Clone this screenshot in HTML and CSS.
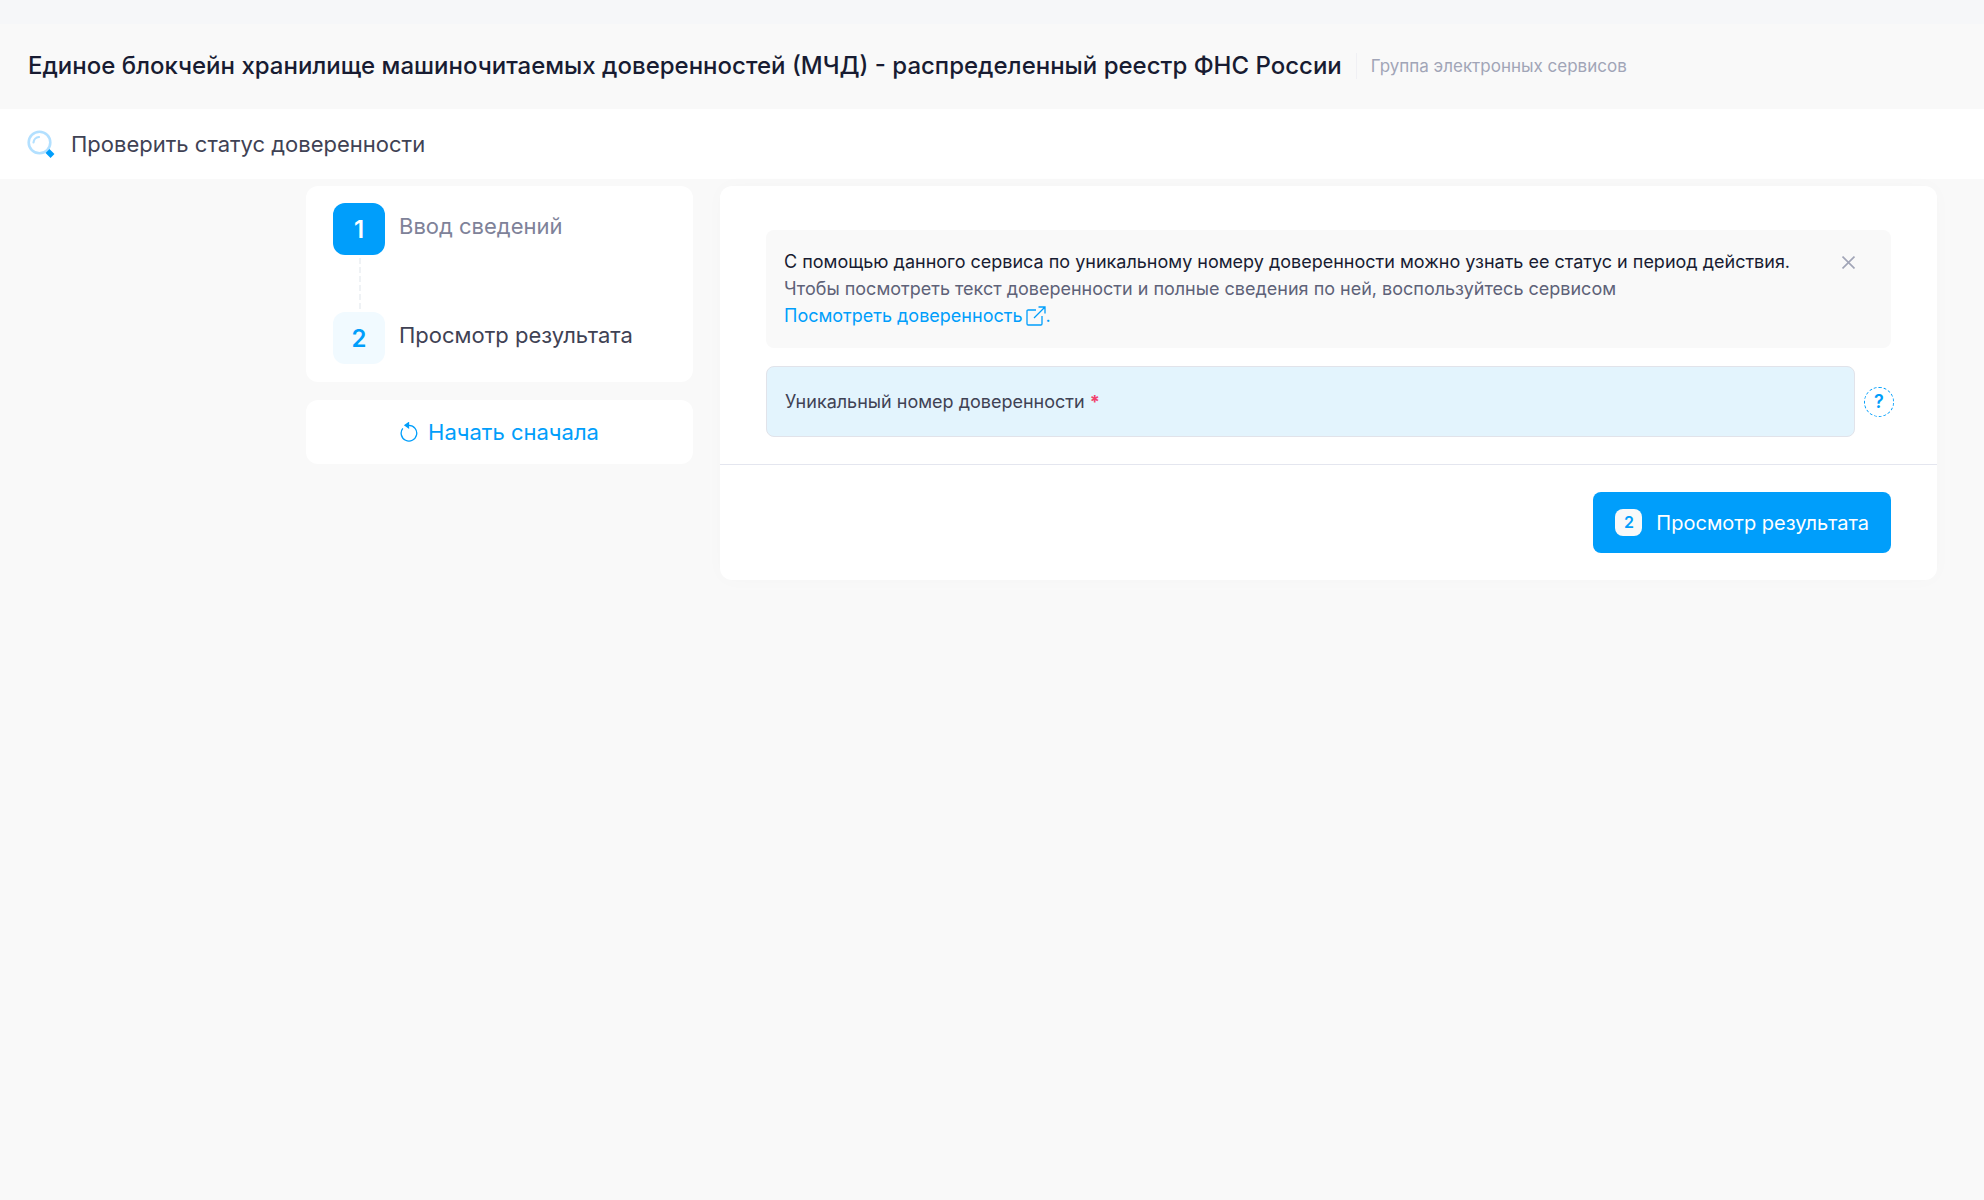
FILE: index.html
```html
<!DOCTYPE html>
<html lang="ru">
<head>
    <meta charset="UTF-8">
    <title>Проверить статус доверенности</title>
    <meta name="viewport" content="width=device-width, initial-scale=1.0">
    <link rel="stylesheet" href="styles.css">
</head>
<body>
    <header class="header">
        <h1>Единое блокчейн хранилище машиночитаемых доверенностей (МЧД) - распределенный реестр ФНС России</h1>
        <span class="header-group">Группа электронных сервисов</span>
    </header>

    <div class="service-bar">
        <svg class="service-icon" viewBox="0 0 28 28" fill="none" aria-hidden="true">
            <circle cx="12.5" cy="12.5" r="10.8" stroke="#b3e0ff" stroke-width="2.6"/>
            <path d="M6.5 12.5a6 6 0 0 1 5.5-5.5" stroke="#b3e0ff" stroke-width="2.2" stroke-linecap="round"/>
            <path d="M20.5 21l5 5" stroke="#009efb" stroke-width="5.5"/>
        </svg>
        <h2>Проверить статус доверенности</h2>
    </div>

    <main class="content">
        <aside class="sidebar">
            <ol class="card steps">
                <li class="step active">
                    <span class="step-number">1</span>
                    <span class="step-name">Ввод сведений</span>
                </li>
                <li class="step-line"></li>
                <li class="step">
                    <span class="step-number">2</span>
                    <span class="step-name">Просмотр результата</span>
                </li>
            </ol>
            <button type="button" class="card restart-btn">
                <svg class="restart-icon" viewBox="0 0 18 20" fill="none" stroke="currentColor" stroke-width="1.3" aria-hidden="true">
                    <path d="M2.8 6.4A7.8 7.8 0 1 0 9 3.4H6"/>
                    <path d="M8.5 .8v5L5 3.3z" fill="currentColor"/>
                </svg>
                Начать сначала
            </button>
        </aside>

        <form class="card form">
            <div class="form-body">
                <div class="notice">
                    <div class="notice-text">
                        <p class="notice-title">С помощью данного сервиса по уникальному номеру доверенности можно узнать ее статус и период действия.</p>
                        <p>Чтобы посмотреть текст доверенности и полные сведения по ней, воспользуйтесь сервисом</p>
                        <p><a href="#">Посмотреть доверенность
                            <svg class="link-icon" viewBox="0 0 20 20" fill="none" stroke="currentColor" stroke-width="1.3" aria-hidden="true">
                                <path d="M10 4H2.2Q1 4 1 5.2V17.8Q1 19 2.2 19H14.8Q16 19 16 17.8V10"/>
                                <path d="M8 12L19 1M12.5 1H19V7.5"/>
                            </svg>.</a></p>
                    </div>
                    <button type="button" class="close-btn" aria-label="Закрыть">
                        <svg viewBox="0 0 12 12" fill="none" stroke="currentColor" stroke-width="1.5" aria-hidden="true">
                            <path d="M.5 .5l11 11M11.5 .5l-11 11"/>
                        </svg>
                    </button>
                </div>
                <div class="field-row">
                    <div class="field">
                        <label for="poaNumber">Уникальный номер доверенности <span class="required">*</span></label>
                        <input type="text" id="poaNumber" required>
                    </div>
                    <button type="button" class="help-btn" aria-label="Справка">?</button>
                </div>
            </div>
            <div class="form-footer">
                <button type="submit" class="submit-btn">
                    <span class="submit-number">2</span>
                    Просмотр результата
                </button>
            </div>
        </form>
    </main>
</body>
</html>
```
FILE: styles.css
```css
:root {
    --blue: #009efb;
    --bg: #f9f9f9;
    --dark: #181c32;
    --text: #3f4254;
    --muted: #7e8299;
}
* {
    box-sizing: border-box;
}
body {
    margin: 0;
    min-height: 100vh;
    padding-top: 24px;
    font-family: Inter, 'Noto Sans', sans-serif;
    font-size: 18px;
    color: var(--text);
    background: linear-gradient(#f6f7f9 24px, var(--bg) 24px);
}
h1, h2, p {
    margin: 0;
}
button, input {
    font: inherit;
}
button {
    cursor: pointer;
}
a {
    color: var(--blue);
    text-decoration: none;
}
.header {
    display: flex;
    align-items: center;
    min-height: 85px;
    padding: 0 28px 2px;
}
.header h1 {
    font-size: 24px;
    font-weight: 500;
    color: var(--dark);
}
.header-group {
    margin-left: 14px;
    padding-left: 14px;
    border-left: 1px solid #f0f0f4;
    font-size: 17px;
    line-height: 26px;
    color: #a1a5b7;
}
.service-bar {
    display: flex;
    align-items: center;
    gap: 16px;
    min-height: 70px;
    padding: 0 27px;
    background: #fff;
}
.service-bar h2 {
    font-size: 22px;
    font-weight: 400;
}
.service-icon {
    width: 28px;
    height: 28px;
}
.content {
    display: flex;
    align-items: flex-start;
    gap: 27px;
    padding: 7px 47px 0 306px;
}
.card {
    background: #fff;
    border-radius: 12px;
}
.sidebar {
    flex: 0 0 387px;
}
.steps {
    margin: 0 0 18px;
    padding: 17px 27px 18px;
    list-style: none;
}
.step {
    display: flex;
    gap: 14px;
}
.step-number {
    display: flex;
    align-items: center;
    justify-content: center;
    width: 52px;
    height: 52px;
    border-radius: 12px;
    background: #f1faff;
    color: var(--blue);
    font-size: 24px;
    font-weight: 600;
}
.step-name {
    font-size: 22px;
    line-height: 46px;
}
.step.active .step-number {
    background: var(--blue);
    color: #fff;
}
.step.active .step-name {
    color: var(--muted);
}
.step-line {
    height: 51px;
    margin: 3px 0 3px 26px;
    border-left: 2px dashed #eff2f5;
}
.restart-btn {
    display: flex;
    align-items: center;
    justify-content: center;
    gap: 10px;
    width: 100%;
    height: 64px;
    border: none;
    color: var(--blue);
    font-size: 22px;
}
.restart-icon {
    width: 18px;
    height: 20px;
}
.form {
    flex: 1;
    box-shadow: 0 0 20px rgba(76, 87, 125, 0.02);
}
.form-body {
    padding: 44px 46px 27px;
}
.notice {
    display: flex;
    align-items: flex-start;
    justify-content: space-between;
    margin-bottom: 18px;
    padding: 18px 36px 19px 18px;
    border-radius: 8px;
    background: var(--bg);
}
.notice-text {
    line-height: 27px;
    color: #5e6278;
}
.notice-title {
    color: var(--dark);
}
.link-icon {
    width: 20px;
    height: 20px;
    margin-left: -2px;
    vertical-align: -4px;
}
.close-btn {
    padding: 8px 0;
    border: none;
    background: none;
    color: #a1a5b7;
    line-height: 0;
}
.close-btn svg {
    width: 13px;
    height: 13px;
}
.field-row {
    display: flex;
    align-items: center;
    gap: 9px;
    margin-right: -3px;
}
.field {
    display: flex;
    flex: 1;
    align-items: center;
    gap: 8px;
    height: 71px;
    padding: 0 18px;
    border: 1px solid #e1e3ea;
    border-radius: 8px;
    background: #e3f4fd;
}
.field input {
    flex: 1;
    height: 100%;
    border: none;
    outline: none;
    background: none;
}
.required {
    color: #f1416c;
    font-weight: 700;
}
.help-btn {
    width: 30px;
    height: 30px;
    padding: 0;
    border: 1px dashed var(--blue);
    border-radius: 50%;
    background: none;
    color: var(--blue);
    font-weight: 600;
}
.form-footer {
    display: flex;
    justify-content: flex-end;
    padding: 27px 46px;
    border-top: 1px solid #e4e6ef;
}
.submit-btn {
    display: flex;
    align-items: center;
    gap: 14px;
    height: 61px;
    padding: 0 22px;
    border: none;
    border-radius: 8px;
    background: var(--blue);
    color: #fff;
    font-size: 20px;
}
.submit-number {
    width: 27px;
    border-radius: 8px;
    background: var(--bg);
    color: var(--blue);
    font-size: 16px;
    font-weight: 600;
    line-height: 27px;
}
```
